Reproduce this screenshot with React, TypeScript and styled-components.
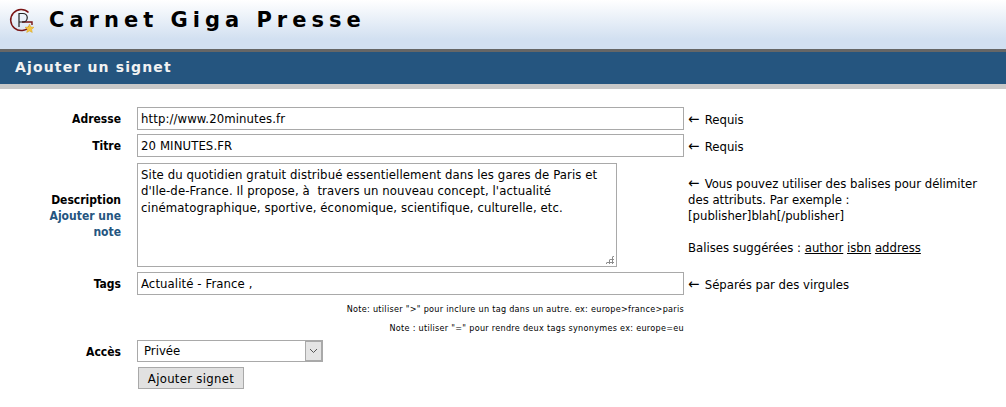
import React from 'react'
import styled, { createGlobalStyle } from 'styled-components'

const GlobalStyle = createGlobalStyle`
  html, body {
    margin: 0;
    padding: 0;
    background: #fff;
    color: #000;
    font-family: "DejaVu Sans", sans-serif;
    font-stretch: condensed;
    font-size: 13px;
  }
`

const Logo: React.FC = () => (
  <LogoSvg viewBox="0 0 26 26" aria-hidden="true">
    <path d="M19.5 5.5 A10.5 10.5 0 1 0 20.5 19.5" fill="none" stroke="#7a1414" strokeWidth="1.5" />
    <path d="M13 15 H23 V18" fill="none" stroke="#7a1414" strokeWidth="1.4" />
    <path d="M10 20 V6.5 H14 A4 4 0 0 1 14 15 H10" fill="none" stroke="#222" strokeWidth="1.2" />
    <path d="M20.5 17 L21.8 20 L25 20.3 L22.6 22.4 L23.3 25.5 L20.5 23.9 L17.7 25.5 L18.4 22.4 L16 20.3 L19.2 20 Z" fill="#f4c542" stroke="#d9a520" strokeWidth="0.5" />
  </LogoSvg>
)

const App: React.FC = () => (
  <>
    <GlobalStyle />
    <Header>
      <Logo />
      <SiteTitle>Carnet Giga Presse</SiteTitle>
    </Header>
    <Banner>Ajouter un signet</Banner>
    <Form>
      <Label>Adresse</Label>
      <TextInput defaultValue="http://www.20minutes.fr" readOnly />
      <Hint><Arrow>←</Arrow> Requis</Hint>

      <Label>Titre</Label>
      <TextInput defaultValue="20 MINUTES.FR" readOnly />
      <Hint><Arrow>←</Arrow> Requis</Hint>

      <DescriptionLabel>
        Description
        <NoteLink>Ajouter une note</NoteLink>
      </DescriptionLabel>
      <AreaWrap>
        <TextArea
          readOnly
          defaultValue={
            "Site du quotidien gratuit distribué essentiellement dans les gares de Paris et d'Ile-de-France. Il propose, à  travers un nouveau concept, l'actualité cinématographique, sportive, économique, scientifique, culturelle, etc."
          }
        />
        <ResizeGrip />
      </AreaWrap>
      <DescriptionHint>
        <Arrow>←</Arrow> Vous pouvez utiliser des balises pour délimiter
        <br />
        des attributs. Par exemple :
        <br />
        [publisher]blah[/publisher]
        <br />
        <br />
        Balises suggérées : <Tag>author</Tag> <Tag>isbn</Tag> <Tag>address</Tag>
      </DescriptionHint>

      <Label>Tags</Label>
      <TextInput defaultValue="Actualité - France ," readOnly />
      <Hint><Arrow>←</Arrow> Séparés par des virgules</Hint>

      <FirstNote>Note: utiliser "&gt;" pour inclure un tag dans un autre. ex: europe&gt;france&gt;paris</FirstNote>
      <Note>Note : utiliser "=" pour rendre deux tags synonymes ex: europe=eu</Note>

      <AccessLabel>Accès</AccessLabel>
      <SelectBox>
        <SelectValue>Privée</SelectValue>
        <SelectArrow>
          <svg width="9" height="6" viewBox="0 0 9 6" aria-hidden="true">
            <path d="M1 1 L4.5 4.5 L8 1" fill="none" stroke="#555" strokeWidth="1" />
          </svg>
        </SelectArrow>
      </SelectBox>
      <SubmitButton type="button">Ajouter signet</SubmitButton>
    </Form>
  </>
)

const Header = styled.header`
  height: 49px;
  box-sizing: border-box;
  display: flex;
  align-items: center;
  padding: 0 0 9px 9px;
  gap: 14px;
  background: linear-gradient(#ffffff, #d2e0f1 80%);
`

const LogoSvg = styled.svg`
  width: 26px;
  height: 26px;
  flex: none;
`

const SiteTitle = styled.h1`
  margin: 0;
  font-family: "DejaVu Sans", Verdana, sans-serif;
  font-stretch: normal;
  font-size: 21px;
  font-weight: bold;
  letter-spacing: 5px;
  color: #000;
`

const Banner = styled.div`
  height: 32px;
  box-sizing: content-box;
  border-top: 3px solid #666;
  border-bottom: 5px solid #c8c8c8;
  background: #25557f;
  color: #f2f2f2;
  font-family: "DejaVu Sans", Verdana, sans-serif;
  font-stretch: normal;
  font-size: 14px;
  font-weight: bold;
  letter-spacing: 1.15px;
  line-height: 30px;
  padding-left: 15px;
`

const Form = styled.form`
  display: grid;
  grid-template-columns: 121px 547px 1fr;
  column-gap: 16px;
  align-items: center;
  padding-top: 16px;
`

const Label = styled.label`
  grid-column: 1;
  padding-top: 1px;
  text-align: right;
  font-weight: 600;
  font-size: 12px;
`

const DescriptionLabel = styled(Label)`
  line-height: 16px;
  padding-left: 30px;
  padding-top: 3px;
`

const AccessLabel = styled(Label)`
  padding-top: 4px;
`

const NoteLink = styled.a`
  display: block;
  color: #25557f;
`

const TextInput = styled.input`
  box-sizing: border-box;
  width: 100%;
  height: 23px;
  margin: 2px 0;
  padding: 0 3px;
  border: 1px solid #a9a9a9;
  font: inherit;
  letter-spacing: 0.1px;
  outline: none;
`

const AreaWrap = styled.div`
  position: relative;
  width: 480px;
  height: 104px;
  margin: 4px 0 3px;
`

const TextArea = styled.textarea`
  display: block;
  box-sizing: border-box;
  width: 100%;
  height: 100%;
  padding: 3px 3px;
  border: 1px solid #a9a9a9;
  font: inherit;
  line-height: 16.4px;
  letter-spacing: 0.1px;
  outline: none;
  resize: none;
`

const ResizeGrip = styled.span`
  position: absolute;
  right: 3px;
  bottom: 3px;
  width: 9px;
  height: 9px;
  background: radial-gradient(circle, #8c8c8c 1px, transparent 1.2px) 0 0 / 3px 3px;
  clip-path: polygon(100% 0, 100% 100%, 0 100%);
`

const Hint = styled.div`
  margin-left: -12px;
  padding-top: 1px;
  white-space: nowrap;
`

const Arrow = styled.span`
  display: inline-block;
  width: 13px;
  font-size: 15px;
  line-height: 1;
`

const DescriptionHint = styled(Hint)`
  line-height: 16px;
  align-self: start;
  margin-top: 16px;
`

const Tag = styled.span`
  text-decoration: underline;
`

const Note = styled.div`
  grid-column: 1 / 3;
  text-align: right;
  font-size: 9px;
  letter-spacing: 0.29px;
  line-height: 19px;
  white-space: nowrap;
`

const FirstNote = styled(Note)`
  margin-top: 3px;
`

const SelectBox = styled.div`
  box-sizing: border-box;
  grid-column: 2;
  width: 186px;
  height: 22px;
  margin-top: 2px;
  display: flex;
  justify-content: space-between;
  border: 1px solid #a9a9a9;
  line-height: 20px;
`

const SelectValue = styled.span`
  padding-left: 6px;
`

const SelectArrow = styled.span`
  box-sizing: border-box;
  width: 17px;
  display: flex;
  align-items: center;
  justify-content: center;
  background: #e4e4e4;
  border: 1px solid #a9a9a9;
`

const SubmitButton = styled.button`
  grid-column: 2;
  justify-self: start;
  box-sizing: border-box;
  width: 106px;
  height: 22px;
  margin: 5px 0 0 1px;
  padding: 0;
  border: 1px solid #a9a9a9;
  background: #e1e1e1;
  color: #000;
  font: inherit;
  letter-spacing: 0.3px;
`

export default App
